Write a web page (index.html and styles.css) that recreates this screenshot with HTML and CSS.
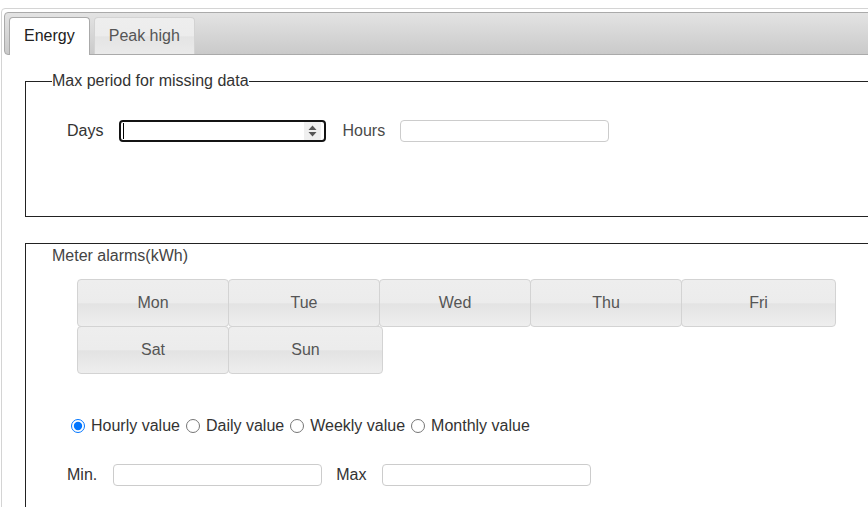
FILE: index.html
```html
<!DOCTYPE html>
<html lang="en">
<head>
    <meta charset="UTF-8">
    <meta name="viewport" content="width=device-width, initial-scale=1.0">
    <title>Meter settings</title>
    <link rel="stylesheet" href="styles.css">
</head>
<body>
    <div class="tabs">
        <ul class="tabs-nav">
            <li class="tab active"><a href="#energy">Energy</a></li>
            <li class="tab"><a href="#peak">Peak high</a></li>
        </ul>

        <div class="tab-panel" id="energy">
            <fieldset class="group">
                <legend>Max period for missing data</legend>
                <div class="field-row">
                    <label class="field-label" for="days">Days</label>
                    <div class="spin-field">
                        <span class="caret"></span>
                        <input type="text" id="days" class="spin-input" autocomplete="off">
                        <span class="spinner">
                            <svg width="9" height="12" viewBox="0 0 9 12">
                                <path d="M4.5 0.5 L8.5 5 L0.5 5 Z" fill="#555"/>
                                <path d="M0.5 7 L8.5 7 L4.5 11.5 Z" fill="#555"/>
                            </svg>
                        </span>
                    </div>
                    <label class="field-label muted" for="hours">Hours</label>
                    <input type="text" id="hours" class="text-input" autocomplete="off">
                </div>
            </fieldset>

            <div class="group alarms">
                <div class="group-title">Meter alarms(kWh)</div>

                <div class="weekdays">
                    <div class="day-row">
                        <button type="button" class="day">Mon</button>
                        <button type="button" class="day">Tue</button>
                        <button type="button" class="day">Wed</button>
                        <button type="button" class="day">Thu</button>
                        <button type="button" class="day last">Fri</button>
                    </div>
                    <div class="day-row">
                        <button type="button" class="day">Sat</button>
                        <button type="button" class="day last">Sun</button>
                    </div>
                </div>

                <div class="periods">
                    <label class="period"><input type="radio" name="period" value="hour" checked>Hourly value</label>
                    <label class="period"><input type="radio" name="period" value="day">Daily value</label>
                    <label class="period"><input type="radio" name="period" value="week">Weekly value</label>
                    <label class="period"><input type="radio" name="period" value="month">Monthly value</label>
                </div>

                <div class="field-row limits">
                    <label class="field-label" for="min">Min.</label>
                    <input type="text" id="min" class="text-input" autocomplete="off">
                    <label class="field-label" for="max">Max</label>
                    <input type="text" id="max" class="text-input" autocomplete="off">
                </div>
            </div>
        </div>
    </div>
</body>
</html>
```

FILE: styles.css
```css
* {
    box-sizing: border-box;
}
body {
    margin: 0;
    overflow: hidden;
    background-color: #ffffff;
    color: #333333;
    font-family: "Liberation Sans", Arial, sans-serif;
    font-size: 16px;
}
.tabs {
    width: 1000px;
    height: 620px;
    margin: 8px 0 0 1px;
    padding: 3px 0 0 2px;
    border: 1px solid #d4d4d4;
    border-radius: 4px 0 0 0;
}
.tabs-nav {
    display: flex;
    align-items: flex-start;
    gap: 4px;
    margin: 0;
    padding: 4px 4px 0;
    list-style: none;
    border: 1px solid #aaaaaa;
    border-radius: 4px 0 0 4px;
    background: linear-gradient(#e3e3e3, #cacaca);
}
.tab a {
    display: block;
    padding: 9px 14px;
    line-height: 18px;
    color: #555555;
    text-decoration: none;
    border: 1px solid #d3d3d3;
    border-bottom: none;
    border-radius: 4px 4px 0 0;
    background: linear-gradient(#eeeeee 0%, #ececec 50%, #e4e4e4 52%, #eaeaea 100%);
}
.tab.active a {
    padding-bottom: 10px;
    margin-bottom: -1px;
    color: #212121;
    border-color: #aaaaaa;
    background: #ffffff;
}
.tab-panel {
    padding: 17px 0 0 21px;
}
.group {
    margin: 0;
    border: 1px solid #222222;
}
fieldset.group {
    padding: 30px 0 74px 26px;
}
legend {
    padding: 0;
    line-height: 18px;
    color: #333333;
}
.field-row {
    display: flex;
    align-items: center;
    height: 22px;
    margin-left: 15px;
}
.field-label {
    margin-right: 16px;
}
.field-label.muted {
    margin-right: 15px;
    color: #4a4a4a;
}
.text-input {
    width: 209px;
    height: 22px;
    margin-right: 14px;
    padding: 0 6px;
    border: 1px solid #cccccc;
    border-radius: 4px;
    font: inherit;
}
.spin-field {
    display: flex;
    align-items: center;
    width: 207px;
    height: 22px;
    margin-right: 16px;
    padding: 0 3px 0 2px;
    border: 2px solid #141414;
    border-radius: 4px;
}
.caret {
    width: 1px;
    height: 16px;
    background-color: #000000;
}
.spin-input {
    flex: 1;
    min-width: 0;
    border: none;
    outline: none;
    padding: 0;
    background: transparent;
    font: inherit;
}
.spinner {
    display: flex;
    align-items: center;
    justify-content: center;
    width: 17px;
    height: 18px;
    background-color: #efefef;
}
.alarms {
    margin-top: 26px;
    padding: 3px 0 40px 26px;
}
.group-title {
    line-height: 18px;
    color: #444444;
}
.weekdays {
    margin: 14px 0 0 25px;
}
.day-row {
    display: flex;
}
.day-row + .day-row {
    margin-top: -1px;
}
.day {
    width: 152px;
    height: 48px;
    margin-right: -1px;
    padding: 0;
    border: 1px solid #d3d3d3;
    border-radius: 4px;
    color: #555555;
    font: inherit;
    background: linear-gradient(#eeeeee 0%, #ececec 49%, #e3e3e3 52%, #eeeeee 100%);
}
.day.last {
    width: 155px;
}
.periods {
    display: flex;
    align-items: center;
    height: 20px;
    margin: 42px 0 0 14px;
}
.period {
    display: inline-flex;
    align-items: center;
    margin-right: 1px;
}
.period input {
    width: 14px;
    height: 14px;
    margin: 0 6px 0 5px;
}
.limits {
    margin-top: 28px;
}
```
